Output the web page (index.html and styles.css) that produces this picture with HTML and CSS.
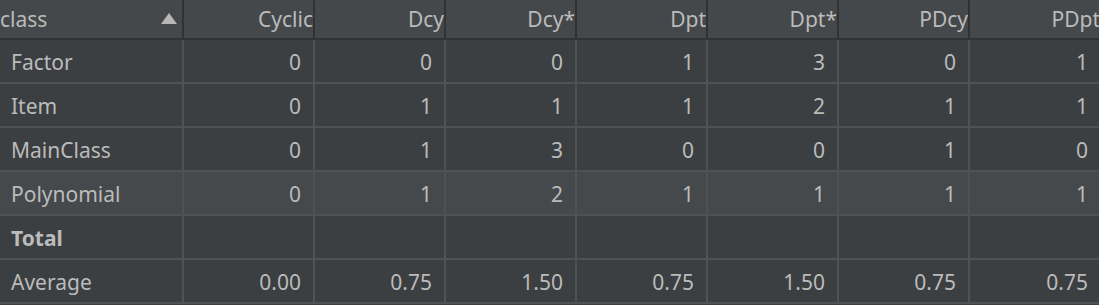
FILE: index.html
```html
<!DOCTYPE html>
<html>
<head>
<meta charset="utf-8">
<link rel="stylesheet" href="styles.css">
</head>
<body>
<table class="metrics">
  <colgroup>
    <col class="c-first"><col class="c-num"><col class="c-num"><col class="c-num"><col class="c-num"><col class="c-num"><col class="c-num"><col class="c-last">
  </colgroup>
  <thead>
    <tr>
      <th class="h-class"><span>class</span><svg class="sort" width="16" height="11" viewBox="0 0 16 11"><polygon points="8,0 16,11 0,11" fill="#b6b6b6"/></svg></th>
      <th>Cyclic</th><th>Dcy</th><th>Dcy*</th><th>Dpt</th><th>Dpt*</th><th>PDcy</th><th>PDpt</th>
    </tr>
  </thead>
  <tbody>
    <tr><td class="name">Factor</td><td>0</td><td>0</td><td>0</td><td>1</td><td>3</td><td>0</td><td>1</td></tr>
    <tr><td class="name">Item</td><td>0</td><td>1</td><td>1</td><td>1</td><td>2</td><td>1</td><td>1</td></tr>
    <tr><td class="name">MainClass</td><td>0</td><td>1</td><td>3</td><td>0</td><td>0</td><td>1</td><td>0</td></tr>
    <tr class="hover"><td class="name">Polynomial</td><td>0</td><td>1</td><td>2</td><td>1</td><td>1</td><td>1</td><td>1</td></tr>
    <tr><td class="name total">Total</td><td></td><td></td><td></td><td></td><td></td><td></td><td></td></tr>
    <tr><td class="name">Average</td><td>0.00</td><td>0.75</td><td>1.50</td><td>0.75</td><td>1.50</td><td>0.75</td><td>0.75</td></tr>
  </tbody>
</table>
</body>
</html>
```

FILE: styles.css
```css
html, body {
  margin: 0;
  padding: 0;
  background: #3c3f41;
  overflow: hidden;
}
body {
  font-family: "Noto Sans", "Open Sans", sans-serif;
  font-size: 21px;
  color: #bbbbbb;
}
.metrics {
  border-collapse: collapse;
  table-layout: fixed;
  width: 1101px;
}
.c-first { width: 183px; }
.c-num { width: 131px; }
.c-last { width: 132px; }
.metrics thead th {
  background: #45484a;
  height: 38px;
  padding: 1px 0 0 0;
  box-sizing: border-box;
  font-weight: normal;
  text-align: right;
  border-right: 2px solid #323232;
  border-bottom: 2px solid #323232;
  white-space: nowrap;
  overflow: hidden;
  line-height: 37px;
}
.metrics thead th.h-class {
  text-align: left;
  position: relative;
}
.sort {
  position: absolute;
  left: 161px;
  top: 13px;
}
.metrics tbody td {
  height: 40px;
  padding: 2px 12px 0 11px;
  text-align: right;
  border-right: 2px solid #4f5254;
  border-bottom: 2px solid #4f5254;
  line-height: 40px;
  white-space: nowrap;
}
.metrics tbody td.name {
  text-align: left;
}
.metrics tbody td.total {
  font-weight: bold;
}
.metrics tbody tr.hover td {
  background: #46494b;
}
```
